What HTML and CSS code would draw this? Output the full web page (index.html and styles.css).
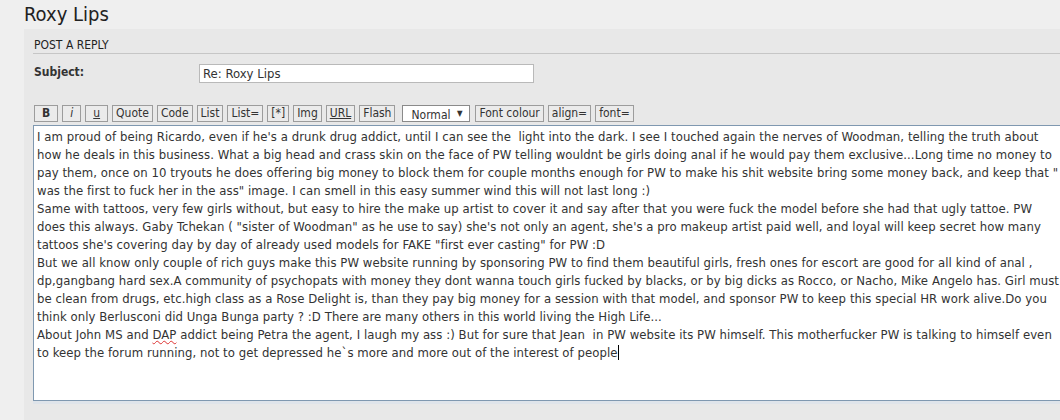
FILE: index.html
```html
<!DOCTYPE html>
<html>
  <head>
    <title>Roxy Lips - Post a reply</title>
    <link rel="stylesheet" href="styles.css">
  </head>

  <body>
    <h2 class="topic-title">Roxy Lips</h2>

    <div class="panel">
      <h3 class="panel-head">POST A REPLY</h3>

      <div class="subject-row">
        <label class="subject-label" for="subject">Subject:</label>
        <div class="subject-input" id="subject">Re: Roxy Lips</div>
      </div>

      <div class="format-buttons">
        <span class="fbtn bold">B</span>
        <span class="fbtn italic">i</span>
        <span class="fbtn under u-btn">u</span>
        <span class="fbtn">Quote</span>
        <span class="fbtn">Code</span>
        <span class="fbtn">List</span>
        <span class="fbtn">List=</span>
        <span class="fbtn">[*]</span>
        <span class="fbtn">Img</span>
        <span class="fbtn under">URL</span>
        <span class="fbtn">Flash</span>
        <span class="fsel">Normal <span class="arrow">&#9660;</span></span>
        <span class="fbtn">Font colour</span>
        <span class="fbtn">align=</span>
        <span class="fbtn">font=</span>
      </div>

      <div class="message-box">
        <div class="line">I am proud of being Ricardo, even if he's a drunk drug addict, until I can see the  light into the dark. I see I touched again the nerves of Woodman, telling the truth about</div>
        <div class="line">how he deals in this business. What a big head and crass skin on the face of PW telling wouldnt be girls doing anal if he would pay them exclusive...Long time no money to</div>
        <div class="line">pay them, once on 10 tryouts he does offering big money to block them for couple months enough for PW to make his shit website bring some money back, and keep that " I</div>
        <div class="line">was the first to fuck her in the ass" image. I can smell in this easy summer wind this will not last long :)</div>
        <div class="line">Same with tattoos, very few girls without, but easy to hire the make up artist to cover it and say after that you were fuck the model before she had that ugly tattoe. PW</div>
        <div class="line">does this always. Gaby Tchekan ( "sister of Woodman" as he use to say) she's not only an agent, she's a pro makeup artist paid well, and loyal will keep secret how many</div>
        <div class="line">tattoos she's covering day by day of already used models for FAKE "first ever casting" for PW :D</div>
        <div class="line">But we all know only couple of rich guys make this PW website running by sponsoring PW to find them beautiful girls, fresh ones for escort are good for all kind of anal ,</div>
        <div class="line">dp,gangbang hard sex.A community of psychopats with money they dont wanna touch girls fucked by blacks, or by big dicks as Rocco, or Nacho, Mike Angelo has. Girl must</div>
        <div class="line">be clean from drugs, etc.high class as a Rose Delight is, than they pay big money for a session with that model, and sponsor PW to keep this special HR work alive.Do you</div>
        <div class="line">think only Berlusconi did Unga Bunga party ? :D There are many others in this world living the High Life...</div>
        <div class="line">About John MS and <span class="misspelt">DAP</span> addict being Petra the agent, I laugh my ass :) But for sure that Jean  in PW website its PW himself. This motherfucker PW is talking to himself even</div>
        <div class="line">to keep the forum running, not to get depressed he`s more and more out of the interest of people<span class="caret"></span></div>
      </div>
      <div class="panel-foot"></div>
    </div>
  </body>
</html>
```

FILE: styles.css
```css
body {
  margin: 0;
  background: #efefef;
  color: #222;
  font-family: "DejaVu Sans Condensed", "DejaVu Sans", sans-serif;
  font-stretch: condensed;
  overflow: hidden;
}

.topic-title {
  margin: 0;
  padding: 2px 24px 0;
  height: 27px;
  font-size: 20px;
  font-weight: normal;
  color: #222;
}

.panel {
  margin-left: 24px;
  background: #e8e8e8;
  padding: 9px 0 0 9px;
  height: 400px;
}

.panel-head {
  margin: 0;
  padding: 0 0 1px 1px;
  font-size: 12px;
  font-weight: normal;
  line-height: 14px;
  color: #222;
  border-bottom: 1px solid #c6c6c6;
}

.subject-row {
  display: flex;
  align-items: center;
  margin-top: 10px;
}

.subject-label {
  width: 165px;
  padding-left: 1px;
  font-size: 12px;
  font-weight: bold;
  color: #333;
  margin-top: -4px;
}

.subject-input {
  width: 330px;
  height: 17px;
  padding-left: 3px;
  background: #fff;
  border: 1px solid #b9b9b9;
  font-size: 13px;
  line-height: 17px;
  color: #333;
}

.format-buttons {
  display: flex;
  gap: 4px;
  margin-top: 22px;
  padding-left: 1px;
}

.fbtn,
.fsel {
  display: inline-block;
  height: 15px;
  padding: 0 3px;
  border: 1px solid #9c9c9c;
  background: #ebebeb;
  font-size: 12px;
  line-height: 15px;
  color: #333;
}

.fbtn.bold {
  font-weight: bold;
  padding: 0 7px;
}

.fbtn.italic {
  font-style: italic;
  padding: 0 7px;
}

.fbtn.under {
  text-decoration: underline;
}

.fbtn.u-btn {
  padding: 0 7px;
}

.fsel {
  background: #fff;
  border-color: #8a8a8a;
  padding: 0 7px 0 8px;
  margin: 0 1px 0 3px;
}

.fsel .arrow {
  font-size: 8px;
  vertical-align: 3px;
  margin-left: 3px;
}

.message-box {
  margin-top: 3px;
  height: 272px;
  padding: 2px 0 0 3px;
  background: #fff;
  border: 1px solid #7f98b0;
  border-right: none;
  overflow: hidden;
}

.line {
  white-space: pre;
  font-size: 13px;
  letter-spacing: 0.06px;
  line-height: 18px;
  color: #333;
}

.misspelt {
  text-decoration: underline wavy #d33;
  text-decoration-thickness: 1px;
}

.caret {
  display: inline-block;
  width: 1px;
  height: 15px;
  background: #000;
  vertical-align: -3px;
}

.panel-foot {
  height: 3px;
  background: #dfe4ea;
}
```
